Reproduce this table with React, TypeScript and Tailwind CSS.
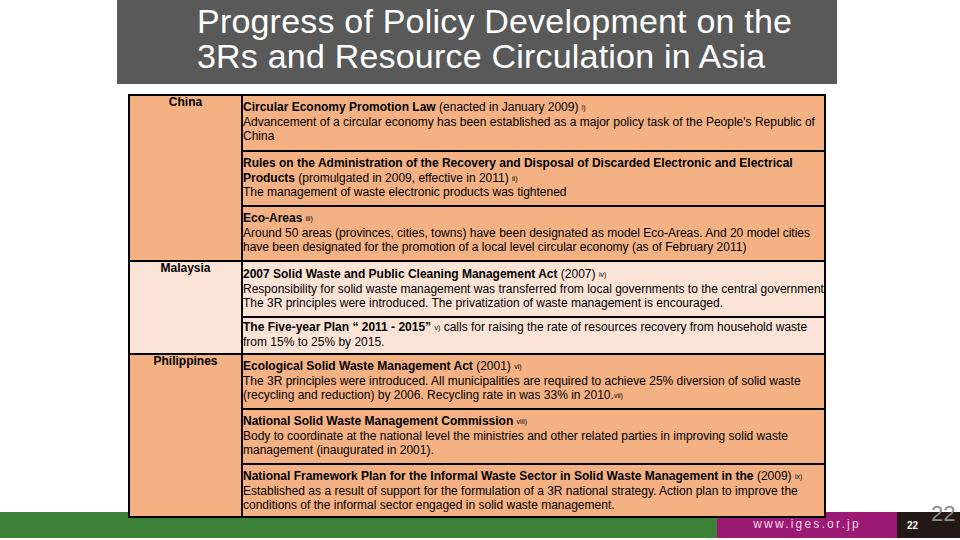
import type { ReactNode } from "react";

type Cell = { h: string; lines: ReactNode[]; pt?: string };

const Sup = ({ children }: { children: ReactNode }) => (
  <sup className="relative -top-[1px] text-[7px] font-normal">{children}</sup>
);

const china: Cell[] = [
  {
    h: "h-[54px]",
    lines: [
      <>
        <b>Circular Economy Promotion Law</b> (enacted in January 2009) <Sup>i)</Sup>
      </>,
      "Advancement of a circular economy has been established as a major policy task of the People's Republic of",
      "China",
    ],
  },
  {
    h: "h-[55px]",
    lines: [
      <b>Rules on the Administration of the Recovery and Disposal of Discarded Electronic and Electrical</b>,
      <>
        <b>Products</b> (promulgated in 2009, effective in 2011) <Sup>ii)</Sup>
      </>,
      "The management of waste electronic products was tightened",
    ],
  },
  {
    h: "h-[55px]",
    lines: [
      <>
        <b>Eco-Areas</b> <Sup>iii)</Sup>
      </>,
      "Around 50 areas (provinces, cities, towns) have been designated as model Eco-Areas. And 20 model cities",
      "have been designated for the promotion of a local level circular economy (as of February 2011)",
    ],
  },
];

const malaysia: Cell[] = [
  {
    h: "h-[54px]",
    pt: "pt-[5px]",
    lines: [
      <>
        <b>2007 Solid Waste and Public Cleaning Management Act</b> (2007) <Sup>iv)</Sup>
      </>,
      "Responsibility for solid waste management was transferred from local governments to the central government",
      "The 3R principles were introduced. The privatization of waste management is encouraged.",
    ],
  },
  {
    h: "h-[37px]",
    pt: "pt-[2px]",
    lines: [
      <>
        <b>The Five-year Plan “ 2011 - 2015”</b> <Sup>v)</Sup> calls for raising the rate of resources recovery from household waste
      </>,
      "from 15% to 25% by 2015.",
    ],
  },
];

const philippines: Cell[] = [
  {
    h: "h-[53px]",
    lines: [
      <>
        <b>Ecological Solid Waste Management Act</b> (2001) <Sup>vi)</Sup>
      </>,
      "The 3R principles were introduced. All municipalities are required to achieve 25% diversion of solid waste",
      <>
        (recycling and reduction) by 2006. Recycling rate in was 33% in 2010.<Sup>vii)</Sup>
      </>,
    ],
  },
  {
    h: "h-[55px]",
    lines: [
      <>
        <b>National Solid Waste Management Commission</b> <Sup>viii)</Sup>
      </>,
      "Body to coordinate at the national level the ministries and other related parties in improving solid waste",
      "management (inaugurated in 2001).",
    ],
  },
  {
    h: "h-[53px]",
    lines: [
      <>
        <b>National Framework Plan for the Informal Waste Sector in Solid Waste Management in the</b> (2009) <Sup>ix)</Sup>
      </>,
      "Established as a result of support for the formulation of a 3R national strategy. Action plan to improve the",
      "conditions of the informal sector engaged in solid waste management.",
    ],
  },
];

function Group({
  name,
  cells,
  bg,
  first,
}: {
  name: string;
  cells: Cell[];
  bg: string;
  first?: boolean;
}) {
  return (
    <div className={`flex ${bg} ${first ? "" : "border-t-2 border-black"}`}>
      <div className="w-[113px] shrink-0 border-r-2 border-black text-center text-[12px] font-bold leading-[12px]">
        {name}
      </div>
      <div className="flex-1">
        {cells.map((c, i) => (
          <div
            key={i}
            className={`${c.h} ${c.pt ?? "pt-[4px]"} ${i > 0 ? "border-t-2 border-black" : ""} whitespace-nowrap text-[12px] leading-[14.5px] text-black`}
          >
            {c.lines.map((l, j) => (
              <div key={j}>{l}</div>
            ))}
          </div>
        ))}
      </div>
    </div>
  );
}

export default function App() {
  return (
    <div className="relative flex h-[540px] w-[960px] flex-col overflow-hidden bg-white font-['Liberation_Sans',Arial,sans-serif]">
      <div className="flex w-[720px] flex-col pl-[117px] box-content">
        <div className="h-[84px] bg-[#595959] pl-[80px] pt-[4px] text-[34px] leading-[35px] tracking-[0.2px] text-white">
          <div>Progress of Policy Development on the</div>
          <div>3Rs and Resource Circulation in Asia</div>
        </div>

        <div className="relative z-10 mx-[11px] mt-[10px] border-2 border-black">
          <Group name="China" cells={china} bg="bg-[#f4b183]" first />
          <Group name="Malaysia" cells={malaysia} bg="bg-[#fbe4d5]" />
          <Group name="Philippines" cells={philippines} bg="bg-[#f4b183]" />
        </div>
      </div>

      <div className="-mt-[6px] flex h-[26px]">
        <div className="w-[717px] bg-[#3d8238]" />
        <div className="flex w-[180px] items-center justify-center bg-[#9b1b74] pb-[2px] text-[12px] tracking-[2.2px] text-[#f3d9ea]">
          www.iges.or.jp
        </div>
        <div className="flex flex-1 items-center bg-[#231815] pl-[10px] text-[10px] font-bold text-white">
          22
        </div>
      </div>

      <div className="absolute left-[931px] top-[503px] z-20 text-[22px] leading-[22px] text-[#8c8c8c]">
        22
      </div>
    </div>
  );
}
